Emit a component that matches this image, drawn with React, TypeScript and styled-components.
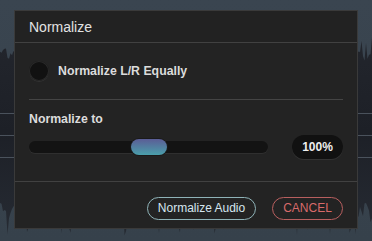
import styled, { createGlobalStyle } from 'styled-components';

const GlobalStyle = createGlobalStyle`
    html, body {
        margin: 0;
        padding: 0;
        background: #38424c;
    }
    body {
        font-family: "Liberation Sans", Arial, sans-serif;
    }
`;

// deterministic pseudo-random waveform for the editor behind the dialog
const buildWave = () => {
    let seed = 7;
    const rnd = () => {
        seed = (seed * 9301 + 49297) % 233280;
        return seed / 233280;
    };
    const mid = 131;
    const top: string[] = [];
    const bottom: string[] = [];
    for (let x = 0; x <= 372; x += 1.5) {
        const a = 70 + rnd() * 34 * (rnd() > 0.7 ? 1 : 0.55);
        const b = 70 + rnd() * 36 * (rnd() > 0.6 ? 1 : 0.5);
        top.push(`${x},${(mid - a).toFixed(1)}`);
        bottom.unshift(`${x},${(mid + b).toFixed(1)}`);
    }
    return `M${top.join(' L')} L${bottom.join(' L')} Z`;
};
const wavePath = buildWave();
const gridRows = [113.5, 135.5, 157.5];

const App = () => {
    return (
        <>
            <GlobalStyle />
            <Stage>
                <Wave viewBox="0 0 372 241" preserveAspectRatio="none">
                    <defs>
                        <linearGradient id="bg" x1="0" y1="0" x2="0" y2="1">
                            <stop offset="0" stopColor="#3a4550" />
                            <stop offset="1" stopColor="#36414b" />
                        </linearGradient>
                        <linearGradient id="wf" x1="0" y1="0" x2="0" y2="1">
                            <stop offset="0" stopColor="#23262d" />
                            <stop offset="0.5" stopColor="#1d2027" />
                            <stop offset="1" stopColor="#262b33" />
                        </linearGradient>
                    </defs>
                    <rect width="372" height="241" fill="url(#bg)" />
                    <path d={wavePath} fill="url(#wf)" />
                    {gridRows.map(y => (
                        <g key={y} stroke="#4a525c" strokeWidth="1">
                            <line x1="0" y1={y} x2="14" y2={y} />
                            <line x1="358" y1={y} x2="372" y2={y} />
                        </g>
                    ))}
                </Wave>
                <Dialog>
                    <Header>Normalize</Header>
                    <Body>
                        <CheckRow>
                            <Radio />
                            <CheckLabel>Normalize L/R Equally</CheckLabel>
                        </CheckRow>
                        <Divider />
                        <SectionLabel>Normalize to</SectionLabel>
                        <SliderRow>
                            <Track>
                                <Thumb />
                            </Track>
                            <ValuePill>100%</ValuePill>
                        </SliderRow>
                    </Body>
                    <Footer>
                        <Button $variant="primary">Normalize Audio</Button>
                        <Button $variant="cancel">CANCEL</Button>
                    </Footer>
                </Dialog>
            </Stage>
        </>
    );
};

export default App;

const Stage = styled.div`
    position: relative;
    width: 372px;
    height: 241px;
    overflow: hidden;
    padding: 10px 14px 0;
    box-sizing: border-box;
`;

// editor waveform lying under the modal dialog
const Wave = styled.svg`
    position: absolute;
    inset: 0;
    z-index: 0;
    width: 372px;
    height: 241px;
    display: block;
`;

const Dialog = styled.div`
    position: relative;
    z-index: 1;
    width: 344px;
    height: 219px;
    box-sizing: border-box;
    background: #232323;
    border: 1px solid #3a3a3a;
    display: flex;
    flex-direction: column;
    color: #e2e2e2;
`;

const Header = styled.div`
    height: 32px;
    box-sizing: border-box;
    padding: 0 14px;
    display: flex;
    align-items: center;
    font-size: 14px;
    border-bottom: 1px solid #414141;
    background: #222;
`;

const Body = styled.div`
    padding: 0 14px;
    display: flex;
    flex-direction: column;
    height: 139px;
    box-sizing: border-box;
    border-bottom: 1px solid #414141;
`;

const CheckRow = styled.div`
    display: flex;
    align-items: center;
    gap: 9px;
    height: 55px;
`;

const Radio = styled.div`
    width: 20px;
    height: 20px;
    border-radius: 50%;
    background: #111;
    box-shadow: inset 0 0 0 1px #2a2a2a, 0 1px 0 #333;
`;

const CheckLabel = styled.span`
    font-size: 12.3px;
    font-weight: bold;
    color: #dcdcdc;
`;

const Divider = styled.div`
    height: 1px;
    background: #444;
    margin-top: 1px;
`;

const SectionLabel = styled.div`
    font-size: 12.3px;
    font-weight: bold;
    color: #dcdcdc;
    margin-top: 12px;
`;

const SliderRow = styled.div`
    display: flex;
    align-items: center;
    justify-content: space-between;
    margin-top: 9px;
`;

const Track = styled.div`
    width: 239px;
    height: 12px;
    border-radius: 6px;
    background: #131313;
    box-shadow: 0 1px 0 #2f2f2f;
    display: flex;
    align-items: center;
    padding-left: 102px;
    box-sizing: border-box;
`;

const Thumb = styled.div`
    width: 36px;
    height: 16px;
    border-radius: 8px;
    background: linear-gradient(to bottom, #5b5d96, #4a9fab);
    box-shadow: 0 0 0 1px #1a1a1a;
`;

const ValuePill = styled.div`
    width: 51px;
    height: 24px;
    border-radius: 12px;
    background: #111;
    box-shadow: 0 1px 0 #333;
    display: flex;
    align-items: center;
    justify-content: center;
    font-size: 12px;
    font-weight: bold;
    color: #eee;
`;

const Footer = styled.div`
    flex: 1;
    display: flex;
    align-items: center;
    justify-content: flex-end;
    gap: 16px;
    padding: 6px 14px 0;
`;

const Button = styled.button<{ $variant: 'primary' | 'cancel' }>`
    height: 23px;
    padding: 0;
    border-radius: 12px;
    background: transparent;
    font-family: "Liberation Sans", Arial, sans-serif;
    font-size: 12px;
    border: 1px solid ${p => (p.$variant === 'primary' ? '#8fb3b8' : '#b85f5f')};
    color: ${p => (p.$variant === 'primary' ? '#d6e6f0' : '#d86a6a')};
    width: ${p => (p.$variant === 'primary' ? '109px' : '71px')};
    cursor: pointer;
`;
